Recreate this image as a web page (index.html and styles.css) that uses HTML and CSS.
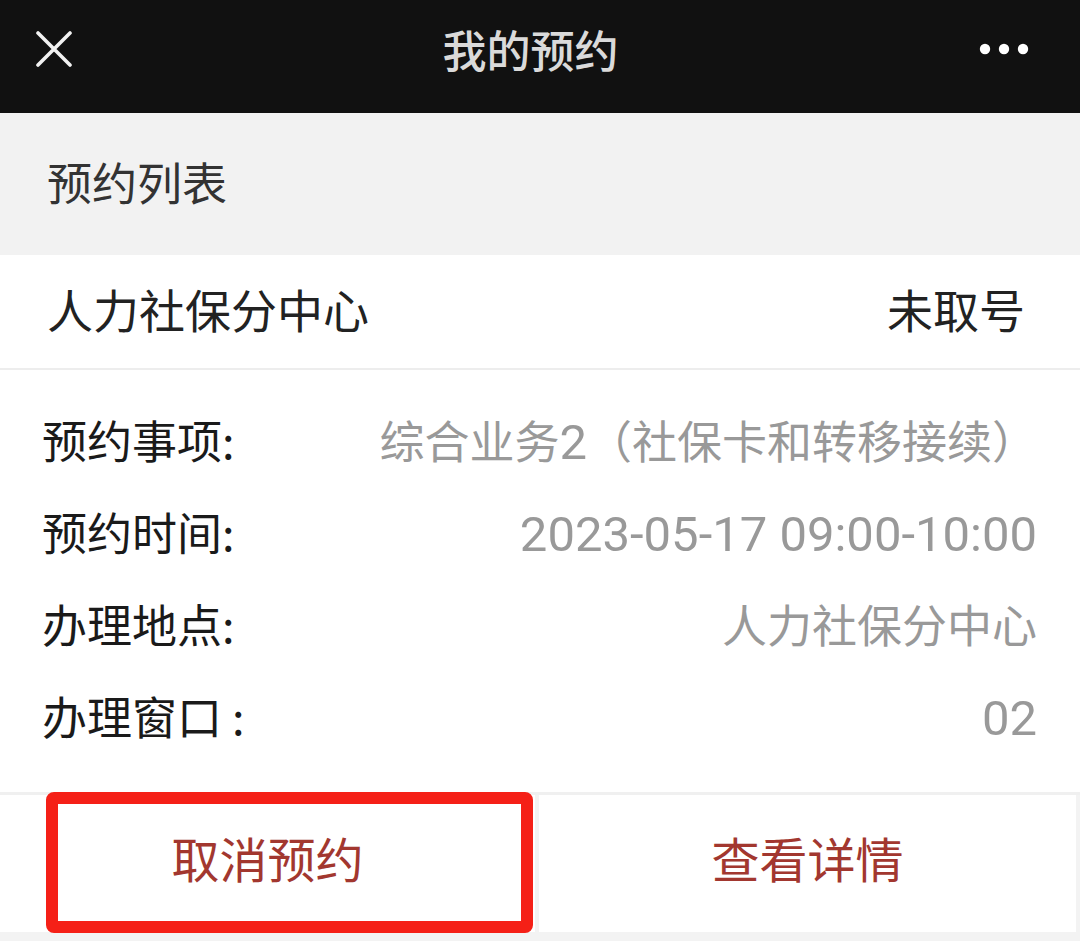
FILE: index.html
```html
<!DOCTYPE html>
<html lang="zh-CN">
<head>
<meta charset="utf-8">
<title>我的预约</title>
<link rel="stylesheet" href="styles.css">
</head>
<body>
<div class="page">
  <header class="topbar">
    <svg class="icon-close" width="36" height="36" viewBox="0 0 36 36"><path d="M2 2 L34 34 M34 2 L2 34" stroke="#f2f2f2" stroke-width="3.6" stroke-linecap="round"/></svg>
    <div class="title">我的预约</div>
    <svg class="icon-more" width="50" height="12" viewBox="0 0 50 12"><circle cx="6" cy="6" r="5.2" fill="#fff"/><circle cx="25" cy="6" r="5.2" fill="#fff"/><circle cx="44" cy="6" r="5.2" fill="#fff"/></svg>
  </header>
  <section class="section-head">预约列表</section>
  <div class="card">
    <div class="card-head">
      <span class="org">人力社保分中心</span>
      <span class="status">未取号</span>
    </div>
    <div class="details">
      <div class="row"><span class="label">预约事项:</span><span class="value">综合业务<span class="num">2</span>（社保卡和转移接续）</span></div>
      <div class="row"><span class="label">预约时间:</span><span class="value num solo">2023-05-17 09:00-10:00</span></div>
      <div class="row"><span class="label">办理地点:</span><span class="value">人力社保分中心</span></div>
      <div class="row"><span class="label">办理窗口 :</span><span class="value num solo">02</span></div>
    </div>
    <div class="actions">
      <div class="btn">取消预约</div>
      <div class="btn">查看详情</div>
      <div class="highlight"></div>
    </div>
  </div>
</div>
</body>
</html>
```
FILE: styles.css
```css
* { box-sizing: border-box; }
html, body { margin: 0; padding: 0; }
body {
  width: 1080px;
  height: 941px;
  overflow: hidden;
  background: #f2f2f2;
  font-family: "Noto Sans CJK SC", "Noto Sans", sans-serif;
}
.page { width: 1080px; }
.topbar {
  height: 113px;
  background: #111111;
  display: grid;
  grid-template-columns: 1fr auto 1fr;
  align-items: center;
  padding: 0 51px 16px 36px;
}
.icon-close { justify-self: start; }
.icon-more { justify-self: end; }
.title {
  color: #dadada;
  font-size: 44px;
  font-weight: 500;
  line-height: 1;
  margin-right: 4px;
}
.section-head {
  height: 142px;
  display: flex;
  align-items: center;
  padding: 0 0 6px 47px;
  font-size: 45px;
  color: #333;
}
.card { background: #fff; }
.card-head {
  height: 115px;
  display: flex;
  justify-content: space-between;
  align-items: center;
  padding: 0 55px 8px 47px;
  border-bottom: 2px solid #ededed;
  font-size: 46px;
  color: #222;
}
.details {
  padding: 23px 43px 31px 42px;
}
.row {
  height: 92px;
  display: flex;
  justify-content: space-between;
  align-items: center;
  font-size: 45px;
}
.label { color: #1a1a1a; }
.value { color: #999; }
.num {
  font-family: "Roboto", "Noto Sans CJK SC", sans-serif;
  font-size: 49px;
  line-height: 1;
}
.solo { padding-top: 7px; }
.actions {
  position: relative;
  display: grid;
  grid-template-columns: 535px 537px;
  gap: 4px;
  padding: 0 4px 11px 0;
  border-top: 3px solid #f0f0f0;
  background: #f3f3f3;
}
.btn {
  height: 137px;
  background: #fff;
  display: flex;
  align-items: center;
  justify-content: center;
  padding-bottom: 14px;
  font-size: 48px;
  color: #a2372f;
}
.highlight {
  position: absolute;
  left: 46px;
  top: -3px;
  width: 487px;
  height: 141px;
  border: 12px solid #f52017;
  border-radius: 8px;
}
```
